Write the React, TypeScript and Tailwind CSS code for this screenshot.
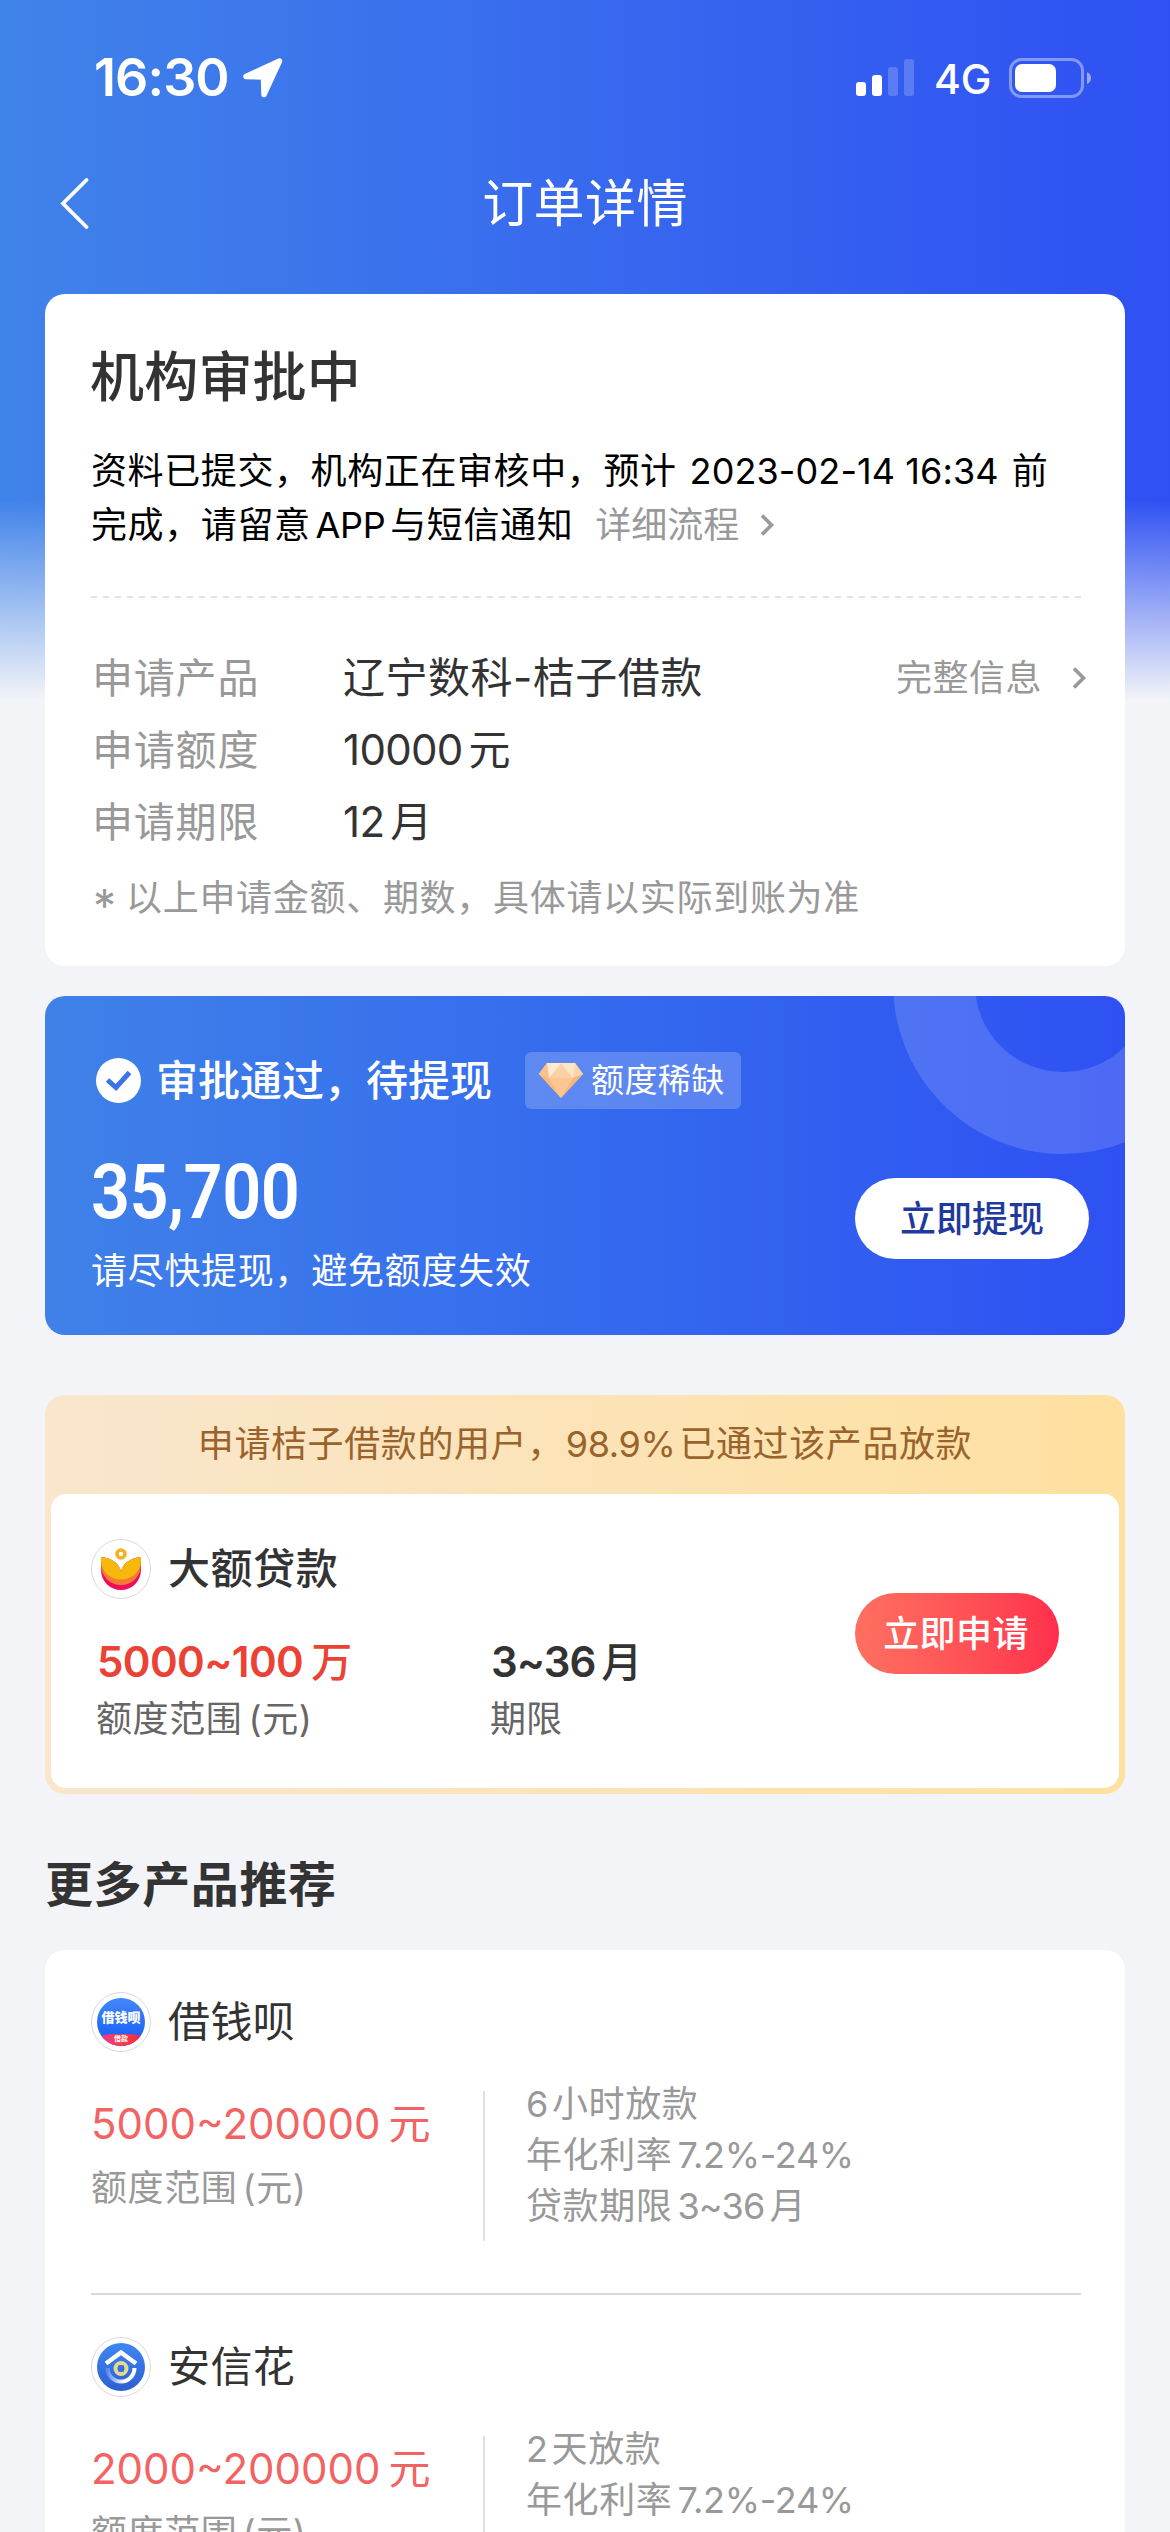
import type { ReactNode } from "react";

const details = [
  { label: "申请产品", text: "辽宁数科-桔子借款" },
  { label: "申请额度", number: "10000", text: "元" },
  { label: "申请期限", number: "12", text: "月" },
];

const products = [
  {
    name: "借钱呗",
    amount: "5000~200000",
    speed: ["6", "小时放款"],
    rate: "7.2%-24%",
    term: "3~36",
    logo: <JieqianLogo />,
  },
  {
    name: "安信花",
    amount: "2000~200000",
    speed: ["2", "天放款"],
    rate: "7.2%-24%",
    term: "3~36",
    logo: <AnxinLogo />,
  },
];

function Arrow({ className = "" }: { className?: string }) {
  return (
    <svg className={className} width="16" height="24" viewBox="0 0 16 24" fill="none">
      <path d="M3 2.5 12.5 12 3 21.5" stroke="#999" strokeWidth="3.6" />
    </svg>
  );
}

function LogoRing({ children }: { children: ReactNode }) {
  return (
    <div className="flex h-[60px] w-[60px] items-center justify-center rounded-full border border-[#d5dade] bg-white">
      {children}
    </div>
  );
}

function LotusLogo() {
  return (
    <svg width="58" height="58" viewBox="0 0 58 58">
      <path d="M9 17V30A20 20 0 0 0 49 30V17C40 18 31 22 29 32C27 22 18 18 9 17Z" fill="#ee0d5c" />
      <path d="M9 17V25A20 20 0 0 0 49 25V17C40 18 31 22 29 32C27 22 18 18 9 17Z" fill="#f47a35" />
      <path d="M9 17V20C10 46 48 46 49 20V17C40 18 31 22 29 32C27 22 18 18 9 17Z" fill="#f7b80c" />
      <circle cx="29" cy="14" r="4" fill="none" stroke="#f3b11c" strokeWidth="3.6" />
    </svg>
  );
}

function JieqianLogo() {
  return (
    <div className="relative h-12 w-12 overflow-hidden rounded-full bg-linear-to-b from-[#4586fb] to-[#0b5bf5] text-center text-white">
      <p className="mt-[11px] -ml-2 w-16 text-[13px] leading-4 font-black">借钱呗</p>
      <p className="absolute inset-x-0 bottom-0 h-3 rounded-t-[40%] bg-linear-to-r from-[#f0319b] via-[#fb3b45] to-[#f3233c] text-[7px] leading-[10px] font-bold">
        借款
      </p>
    </div>
  );
}

function AnxinLogo() {
  return (
    <svg width="48" height="48" viewBox="0 0 48 48">
      <defs>
        <linearGradient id="anxin" x1="0" y1="0" x2="0" y2="1">
          <stop offset="0" stopColor="#3f86f5" />
          <stop offset="1" stopColor="#2f5ed0" />
        </linearGradient>
        <linearGradient id="anxinArc" x1="0" y1="0" x2="1" y2="0">
          <stop offset="0" stopColor="#5c8cf0" />
          <stop offset=".6" stopColor="#fff" />
        </linearGradient>
      </defs>
      <circle cx="24" cy="24" r="24" fill="url(#anxin)" />
      <path d="M9 20.500 24 9.500 39 20.500" fill="none" stroke="#fff" strokeWidth="4.500" />
      <path d="M10.500 25A13.500 13.500 0 0 0 37.500 25" fill="none" stroke="url(#anxinArc)" strokeWidth="4" />
      <circle cx="24" cy="25.500" r="5.500" fill="none" stroke="#e3dc8c" strokeWidth="4" />
      <rect x="21" y="22.500" width="6" height="6" fill="#3b70e2" />
    </svg>
  );
}

function Diamond() {
  return (
    <svg width="44" height="35" viewBox="0 0 44 35">
      <path d="M8 0H36L44 11 22 35 0 11Z" fill="#fcc692" />
      <path d="M8 0H36L44 11 34 15 22 4 10 15 0 11Z" fill="#fbd6ad" />
      <path d="M8 0H22L10 15Z" fill="#fdebd2" />
      <path d="M22 0H36L34 15Z" fill="#fde6c8" />
      <path d="M22 3 34 15H10Z" fill="#fbd0a4" />
      <path d="M0 11 8 0 10 15Z" fill="#fac18c" />
      <path d="M0 11 10 15 22 35Z" fill="#fdb97c" />
      <path d="M34 15 44 11 22 35Z" fill="#fbb576" />
    </svg>
  );
}

function StatusBar() {
  return (
    <div className="flex h-[156px] items-center justify-between pr-[79px] pl-[94px] text-white">
      <div className="flex items-center">
        <span className="text-[52px] leading-none font-semibold tracking-[-0.9px]">16:30</span>
        <svg className="ml-3.5" width="40" height="40" viewBox="0 0 40 40">
          <path d="M36.500 3 3 18.500 20.500 19 21 36.500Z" fill="#fff" stroke="#fff" strokeWidth="5.500" strokeLinejoin="round" />
        </svg>
      </div>
      <div className="flex items-center">
        <svg width="58" height="38" viewBox="0 0 58 38" fill="#fff">
          <rect x="0" y="23" width="10" height="14" rx="3" />
          <rect x="16" y="16" width="10" height="21" rx="3" />
          <rect x="32" y="8" width="10" height="29" rx="3" opacity=".2" />
          <rect x="48" y="0" width="10" height="37" rx="3" opacity=".2" />
        </svg>
        <span className="mt-0.5 ml-5 text-[41px] leading-none font-medium tracking-[-0.3px]">4G</span>
        <svg className="ml-[18px]" width="82" height="40" viewBox="0 0 82 40">
          <rect x="1.500" y="1.500" width="72" height="37" rx="11" fill="none" stroke="#fff" strokeWidth="3" opacity=".4" />
          <rect x="6" y="6" width="41" height="28" rx="7" fill="#fff" />
          <path d="M78 14Q82 16 82 20T78 26Z" fill="#fff" opacity=".5" />
        </svg>
      </div>
    </div>
  );
}

export default function App() {
  return (
    <main className="h-[2532px] w-[1170px] overflow-hidden bg-[#f2f4f8] font-['Inter','Noto_Sans_CJK_SC',sans-serif] text-[#333]">
      <div className="bg-[linear-gradient(to_bottom,transparent_500px,#f2f4f8_700px),linear-gradient(to_right,#4083e9,#2f50f3)] bg-[length:100%_702px] bg-no-repeat">
        <StatusBar />

        {/* 导航栏 */}
        <header className="flex h-[138px] items-start pt-[17px] text-white">
          <svg className="mt-1 ml-[60px]" width="30" height="52" viewBox="0 0 30 52" fill="none">
            <path d="M26.500 3 3 26.500 26.500 50" stroke="#fff" strokeWidth="3.800" strokeLinecap="round" />
          </svg>
          <h1 className="mr-[90px] flex-1 text-center text-[51px] leading-[62px] tracking-[0.4px]">订单详情</h1>
        </header>

        {/* 订单状态 */}
        <section className="mx-[45px] h-[672px] rounded-[20px] bg-white px-[46px] pt-12">
          <h2 className="-ml-px text-[54px] leading-[72px] font-medium tracking-[0.2px]">机构审批中</h2>
          <div className="mt-[30px] text-4xl leading-[54px] tracking-[0.6px] whitespace-nowrap text-black">
            <p>
              资料已提交，机构正在审核中，预计
              <span className="mr-[13px] ml-[13px] tracking-[0.1px]">2023-02-14 16:34</span>前
            </p>
            <p className="flex items-center">
              完成，请留意<span className="mx-[5px] tracking-[-0.4px]">APP</span>与短信通知
              <span className="ml-[22px] tracking-normal text-[#999]">详细流程</span>
              <Arrow className="ml-5" />
            </p>
          </div>
          <div className="mt-[44px] h-0.5 w-[990px] bg-[repeating-linear-gradient(to_right,#e3e3e3_0_6px,transparent_6px_12px)]" />
          <dl className="mt-11 text-[42px] leading-[72px] tracking-[0.5px]">
            {details.map((d, i) => (
              <div key={d.label} className="flex items-center">
                <dt className="w-[252px] pl-px text-[41px] tracking-[0.8px] text-[#999]">{d.label}</dt>
                <dd>
                  {d.number && <span className="mr-1.5 tracking-[-0.7px]">{d.number}</span>}
                  {d.text}
                </dd>
                {i === 0 && (
                  <dd className="mr-[-8px] ml-auto flex items-center text-4xl leading-[72px] text-[#999]">
                    完整信息
                    <Arrow className="ml-[29px]" />
                  </dd>
                )}
              </div>
            ))}
          </dl>
          <p className="mt-[13px] flex text-4xl leading-[54px] tracking-[0.7px] text-[#999]">
            <span className="w-[35px] pt-2 pl-0.5 text-[46px]">*</span>
            以上申请金额、期数，具体请以实际到账为准
          </p>
        </section>
      </div>

      {/* 待提现 */}
      <section className="relative mx-[45px] mt-[30px] flex h-[339px] justify-between overflow-hidden rounded-[20px] bg-linear-to-r from-[#4081e8] to-[#2f50f3] pr-9 pl-[46px] text-white">
        <div className="absolute -top-[182px] left-[848px] h-[340px] w-[340px] rounded-full border-[82px] border-white/15" />
        <div>
          <div className="mt-14 flex h-[57px] items-center">
            <svg className="ml-[5px]" width="45" height="45" viewBox="0 0 45 45">
              <circle cx="22.500" cy="22.500" r="22.500" fill="#fff" />
              <path d="M11.500 22 20 29.500 33.500 14.500" fill="none" stroke="#3c73e9" strokeWidth="5" />
            </svg>
            <h3 className="ml-[15px] text-[42px] leading-[57px] font-medium">审批通过，待提现</h3>
            <span className="ml-[33px] flex h-[57px] w-[216px] items-center rounded-md bg-white/20 pl-3.5 text-[33px] tracking-[0.4px]">
              <Diamond />
              <span className="ml-2">额度稀缺</span>
            </span>
          </div>
          <p className="mt-[38px] origin-left scale-x-90 font-['Roboto',sans-serif] text-[76px] leading-[90px] font-semibold tracking-[-0.6px]">35,700</p>
          <p className="mt-[7px] text-4xl leading-[54px] tracking-[0.7px]">请尽快提现，避免额度失效</p>
        </div>
        <button className="relative mt-[182px] h-[81px] w-[234px] rounded-full bg-white text-4xl font-medium text-[#1f3a9c]">立即提现</button>
      </section>

      {/* 推荐产品 */}
      <section className="mx-[45px] mt-[60px] h-[399px] rounded-[20px] bg-linear-to-r from-[#f9e6cd] to-[#fee09f] px-1.5 pt-[22px]">
        <p className="text-center text-4xl leading-[54px] tracking-[0.6px] text-[#99632b]">
          申请桔子借款的用户，<span className="mr-1 ml-0.5 tracking-[-0.4px]">98.9%</span>已通过该产品放款
        </p>
        <div className="mt-[23px] flex h-[294px] justify-between rounded-[15px] bg-white pr-[60px] pl-10">
          <div>
            <div className="mt-[45px] flex h-[60px] items-center">
              <LogoRing>
                <LotusLogo />
              </LogoRing>
              <h3 className="ml-[17px] text-[42px] leading-[62px] font-medium tracking-[0.6px]">大额贷款</h3>
            </div>
            <div className="mt-[33px] flex pl-1.5">
              <div className="w-[394px]">
                <p className="text-[42px] leading-[60px] font-semibold tracking-[-0.6px] text-[#ea4335]">
                  5000~100<span className="ml-2 text-[41px] font-medium">万</span>
                </p>
                <p className="-ml-px text-4xl leading-[54px] tracking-[0.6px] text-[#666]">
                  额度范围<span className="ml-1.5">(元)</span>
                </p>
              </div>
              <div>
                <p className="text-[42px] leading-[60px] font-semibold tracking-[-1px]">
                  3~36<span className="ml-1.5 text-[41px] font-medium">月</span>
                </p>
                <p className="-ml-px text-4xl leading-[54px] text-[#666]">期限</p>
              </div>
            </div>
          </div>
          <button className="mt-[99px] h-[81px] w-[204px] rounded-full bg-linear-to-r from-[#ff6f61] to-[#ff2e4c] pr-0.5 text-4xl font-medium tracking-[0.4px] text-white">立即申请</button>
        </div>
      </section>

      <h2 className="mt-[55px] ml-[45px] text-5xl leading-[72px] font-bold tracking-[0.6px]">更多产品推荐</h2>

      {/* 更多产品列表 */}
      <section className="mx-[45px] mt-[29px] rounded-[20px] bg-white px-[46px]">
        {products.map((p) => (
          <article key={p.name} className="h-[345px] w-[990px] border-b-2 border-[#d9d9d9] pt-[42px]">
            <div className="flex h-[60px] items-center">
              <LogoRing>{p.logo}</LogoRing>
              <h3 className="ml-[17px] text-[42px] leading-[62px] tracking-[0.4px]">{p.name}</h3>
            </div>
            <div className="mt-[39px] flex h-[150px]">
              <div className="w-[394px] border-r-2 border-[#e0e0e0]">
                <p className="mt-[3px] text-[42px] leading-[60px] text-[#f26363]">
                  {p.amount}
                  <span className="ml-2">元</span>
                </p>
                <p className="mt-[7px] text-4xl leading-[54px] tracking-[0.6px] text-[#999]">
                  额度范围<span className="ml-[5px]">(元)</span>
                </p>
              </div>
              <div className="-mt-3 ml-[41px] text-4xl leading-[51px] tracking-[0.6px] text-[#999]">
                <p>{p.speed[0]}<span className="ml-[3px]">{p.speed[1]}</span></p>
                <p>年化利率<span className="ml-[5px] tracking-[-0.3px]">{p.rate}</span></p>
                <p>贷款期限<span className="mx-[5px] tracking-[-0.8px]">{p.term}</span>月</p>
              </div>
            </div>
          </article>
        ))}
      </section>
    </main>
  );
}
